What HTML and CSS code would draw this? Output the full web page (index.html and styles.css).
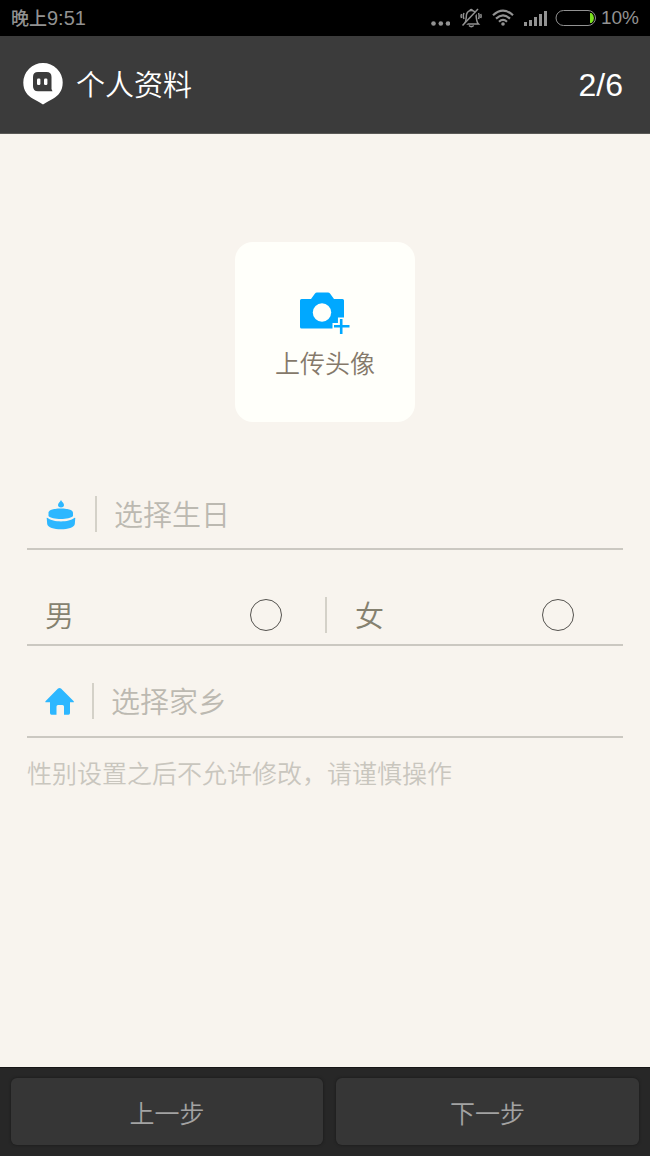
FILE: index.html
```html
<!DOCTYPE html>
<html lang="zh-CN">
<head>
<meta charset="utf-8">
<meta name="viewport" content="width=device-width, initial-scale=1">
<title>个人资料</title>
<link rel="stylesheet" href="styles.css">
</head>
<body>
<div class="status">
  <div class="clock"><span class="period">晚上</span>9:51</div>
  <div class="indicators">
    <svg class="dots" width="20" height="20" viewBox="0 0 20 20" aria-hidden="true"><circle cx="3.500" cy="15.500" r="2.300"/><circle cx="10.800" cy="15.500" r="2.300"/><circle cx="18" cy="15.500" r="2.300"/></svg>
    <svg class="silent" width="22" height="20" viewBox="0 0 22 20" fill="none" aria-hidden="true"><path d="M4.500 16C6.500 13.500 6 10 6.500 6.500C7.300 3.800 9 2.500 11.200 2.500C13.500 2.500 15.500 4 16 6.500C16.500 10 16 13.500 18.500 16Z M9 17.500Q11.300 19.800 13.700 17.500 M10 2.200Q11.200 .6 12.400 2.200 M4 5Q2.600 8 4 11 M1.600 6Q.6 8 1.600 10 M18.500 5Q19.800 8 18.500 11 M20.700 6Q21.500 8 20.700 10"/><path class="gap" d="M3.500 18.200L19 2"/><path d="M2.500 17.500L18 1"/></svg>
    <svg class="wifi" width="22" height="20" viewBox="0 0 22 20" fill="none" aria-hidden="true"><path d="M1 7.3Q11-1.9 21 7.3M4 10.6Q11 4.2 18 10.6M7 13.7Q11 10.1 15 13.7"/><circle cx="11" cy="16" r="1.8"/></svg>
    <svg class="signal" width="23" height="20" viewBox="0 0 23 20" aria-hidden="true"><path d="M0 14h3v4H0zM5 12h3v6H5zM10 9h3v9h-3zM15 6h3v12h-3zM20 3h3v15h-3z"/></svg>
    <svg class="battery" width="42" height="20" viewBox="0 0 42 20" aria-hidden="true"><rect x="1" y="2.5" width="39.5" height="15" rx="7.5"/><path d="M35 5H36.5Q39 7 39 10T36.5 15H35Z"/></svg>
    <span class="percent">10%</span>
  </div>
</div>

<header class="header">
  <svg class="logo" width="40" height="42" viewBox="0 0 40 42" aria-hidden="true"><path fill="#fff" d="M20 0A19.600 19.600 0 0 1 39.700 19.500C39.700 28 35.500 32.500 30 35.800Q24 39 20 41.500Q16 39 10 35.800C4.500 32.500 .3 28 .3 19.500A19.600 19.600 0 0 1 20 0Z"/><path fill="#3b3b3b" d="M15 9H23.500Q28.500 9 28.500 14V26L29.500 28.300H15Q10 28.300 10 23.300V14Q10 9 15 9Z"/><rect x="14" y="15.500" width="3.400" height="6.500" rx="1.200" fill="#fff"/><rect x="21" y="15.500" width="3.400" height="6.500" rx="1.200" fill="#fff"/></svg>
  <h1 class="title">个人资料</h1>
  <span class="step">2/6</span>
</header>

<form class="profile">
  <button class="upload" type="button">
    <svg width="50" height="42" viewBox="0 0 50 42" aria-hidden="true"><path fill="#00a8ff" d="M1.500 7H11L15 1.500Q15.700 .5 17 .5H28Q29.300 .5 30 1.500L34 7H42.500Q44 7 44 8.500V35Q44 36.500 42.500 36.500H1.500Q0 36.500 0 35V8.500Q0 7 1.500 7Z"/><circle cx="22" cy="20.500" r="9.200" fill="#fffffa"/><path d="M41.200 25.500V42M32.500 34.300H49.500" stroke="#fffffa" stroke-width="6.500"/><path d="M41.200 27V42M34 34.300H49.500" stroke="#00a8ff" stroke-width="2.600"/></svg>
    <span>上传头像</span>
  </button>

  <div class="row birthday">
    <label class="icon" for="birthday"><svg width="30" height="36" viewBox="0 0 30 36" fill="#2db7ff" role="img" aria-label="生日"><path d="M15 4C16 6 18 7.300 18 9A3 2.400 0 0 1 12 9C12 7.300 14 6 15 4Z"/><path d="M2.500 16.500C2.500 11 27 11 27 16.500V20C24 24 5.500 24 2.500 20Z"/><path d="M.8 23Q.2 21 1.700 22C7 26.500 23 26.500 28.200 22Q29.700 21 29.200 23L28.800 28C28 35 2 35 1.200 28Z"/></svg></label>
    <input class="field" id="birthday" type="text" placeholder="选择生日" readonly>
  </div>

  <div class="row gender">
    <label class="option"><span>男</span><input type="radio" name="gender" value="male"></label>
    <label class="option"><span>女</span><input type="radio" name="gender" value="female"></label>
  </div>

  <div class="row hometown">
    <label class="icon" for="hometown"><svg width="30" height="36" viewBox="0 0 30 36" fill="#2db7ff" role="img" aria-label="家乡"><path d="M13 5.500Q14.500 4.300 16 5.500L28.500 18Q29.500 19.300 28.200 19.300H25V30Q25 31.800 23.500 31.800H19V23.500Q19 22 17.500 22H13Q11.500 22 11.500 23.500V31.800H6.500Q5 31.800 5 30V19.300H1Q-.3 19.300 .7 18Z"/></svg></label>
    <input class="field" id="hometown" type="text" placeholder="选择家乡" readonly>
  </div>

  <p class="hint">性别设置之后不允许修改，请谨慎操作</p>
</form>

<footer class="footer">
  <button class="nav prev" type="button">上一步</button>
  <button class="nav next" type="button">下一步</button>
</footer>
</body>
</html>
```

FILE: styles.css
```css
* {
  box-sizing: border-box;
}

body {
  margin: 0;
  min-height: 100vh;
  display: flex;
  flex-direction: column;
  background: #f8f4ee;
  font-family: "Liberation Sans", "Noto Sans CJK SC", sans-serif;
  font-weight: 350;
}

button,
input {
  font: inherit;
}

.status {
  height: 36px;
  padding: 0 11px;
  display: flex;
  align-items: center;
  justify-content: space-between;
  background: #000;
  color: #929292;
  font-size: 20px;
  line-height: 36px;
}

.period {
  font-size: 18px;
  font-weight: 500;
}

.indicators {
  display: flex;
  align-items: center;
  gap: 10px;
  fill: #929292;
}

.percent {
  font-size: 19px;
}

.battery {
  margin: 0 -6px 0 -2px;
}

.battery rect {
  fill: none;
  stroke: #929292;
}

.battery path {
  fill: #7be01e;
}

.silent,
.wifi {
  stroke: #929292;
}

.silent {
  stroke-width: 1.5;
}

.silent .gap {
  stroke: #000;
  stroke-width: 2;
}

.wifi {
  stroke-width: 2.2;
}

.wifi circle {
  fill: #929292;
  stroke: none;
}

.header {
  height: 98px;
  padding: 0 27px 2px 23px;
  display: flex;
  align-items: center;
  background: #3b3b3b;
  border-bottom: 1px solid #5a5956;
  color: #fff;
}

.title {
  flex: 1;
  margin: 0 0 0 13px;
  padding-top: 5px;
  font-size: 29px;
  font-weight: 350;
  line-height: 40px;
}

.step {
  padding-top: 4px;
  font-size: 32px;
}

.profile {
  flex: 1;
  padding: 108px 27px 24px;
  display: flex;
  flex-direction: column;
}

.upload {
  align-self: center;
  width: 180px;
  height: 180px;
  padding: 10px 0 0;
  display: flex;
  flex-direction: column;
  align-items: center;
  justify-content: center;
  gap: 12px;
  border: 0;
  border-radius: 18px;
  background: #fffffa;
  color: #85796a;
  font-size: 25px;
  line-height: 36px;
}

.row {
  display: flex;
  border-bottom: 2px solid #cbc8c1;
  font-size: 29px;
  line-height: 36px;
}

.birthday {
  margin-top: 74px;
  padding: 0 18px 16px 19px;
}

.gender {
  display: grid;
  grid-template-columns: repeat(2, minmax(0, 1fr));
  margin-top: 47px;
  padding-bottom: 11px;
}

.hometown {
  margin-top: 37px;
  padding: 0 18px 17px;
}

.icon {
  display: flex;
  padding-right: 19px;
}

.hometown .icon {
  padding-right: 17px;
}

.field {
  flex: 1;
  min-width: 0;
  height: 36px;
  padding: 4px 0 0 17px;
  border: 0;
  border-left: 2px solid #d4d1c8;
  background: none;
  color: #85816f;
}

.field::placeholder {
  color: #bcb9b1;
  opacity: 1;
}

.option {
  height: 36px;
  padding: 0 43px 0 18px;
  display: flex;
  align-items: center;
  justify-content: space-between;
  color: #85816f;
}

.option span {
  padding-top: 4px;
}

.option + .option {
  padding: 0 49px 0 28px;
  border-left: 2px solid #d4d1c8;
}

.option input {
  appearance: none;
  width: 32px;
  height: 32px;
  margin: 0;
  border: 1px solid #55534f;
  border-radius: 50%;
}

.option input:checked {
  background: radial-gradient(#2db7ff 50%, transparent 54%);
}

.hint {
  margin: 18px 0 0;
  color: #c9c6be;
  font-size: 25px;
  line-height: 36px;
}

.footer {
  padding: 10px 11px 11px;
  display: grid;
  grid-template-columns: 312fr 303fr;
  gap: 13px;
  background: #272727;
  border-top: 1px solid #161616;
}

.nav {
  height: 67px;
  padding: 0;
  border: 0;
  border-radius: 6px;
  background: #363636;
  box-shadow: 0 0 2px 1px #202020;
  color: #a3a3a3;
  font-size: 25px;
}
```
